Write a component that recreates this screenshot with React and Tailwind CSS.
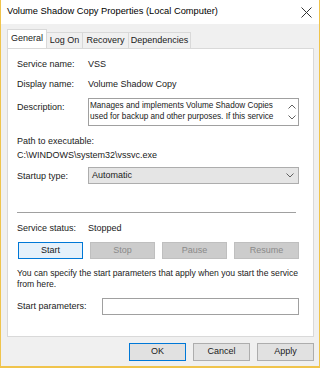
import React from "react";

const FONT = { fontFamily: '"Liberation Sans", Arial, sans-serif' };

const Chevron = ({ dir = "down", className = "" }) => (
  <svg width="8" height="5" viewBox="0 0 8 5" className={className}>
    <path
      d={dir === "down" ? "M0.5 0.5 L4 4 L7.5 0.5" : "M0.5 4.5 L4 1 L7.5 4.5"}
      fill="none"
      stroke="#606060"
      strokeWidth="1"
    />
  </svg>
);

const Label = ({ children, className = "" }) => (
  <div className={`w-[71px] shrink-0 h-[14px] leading-[14px] ${className}`}>{children}</div>
);

const Tab = ({ label, active, w }) => (
  <div
    style={{ width: w }}
    className={
      active
        ? "h-[19px] bg-white border border-b-0 border-[#d9d9d9] leading-[17px] text-center relative z-10 -mb-px"
        : "h-[16px] mt-[3px] bg-[#f0f0f0] border border-l-0 border-b-0 border-[#d9d9d9] leading-[15px] text-center"
    }
  >
    {label}
  </div>
);

const ServiceButton = ({ label, primary }) => (
  <div
    className={
      primary
        ? "h-[17px] border border-[#0078d7] bg-[#e5f1fb] text-[#1a1a1a] flex items-center justify-center"
        : "h-[17px] border border-[#bfbfbf] bg-[#cccccc] text-[#8a8a8a] flex items-center justify-center"
    }
  >
    {label}
  </div>
);

const DialogButton = ({ label, primary }) => (
  <div
    className={`w-[57px] h-[18px] border ${
      primary ? "border-[#0078d7]" : "border-[#adadad]"
    } bg-[#e1e1e1] flex items-center justify-center`}
  >
    {label}
  </div>
);

export default function App() {
  return (
    <div
      style={FONT}
      className="w-[320px] h-[368px] flex flex-col border-x border-b-2 border-[#f0c44c] text-[9px] text-[#1a1a1a] bg-[#f0f0f0]"
    >
      {/* title bar */}
      <div className="h-[24px] bg-white flex items-center justify-between pl-[6px] pr-[7px] text-[9.3px] text-black">
        <span>Volume Shadow Copy Properties (Local Computer)</span>
        <svg width="11" height="11" viewBox="0 0 11 11">
          <path d="M0.5 0.5 L10.5 10.5 M10.5 0.5 L0.5 10.5" stroke="#333" strokeWidth="1" />
        </svg>
      </div>

      <div className="flex-1 flex flex-col pl-[6px] pr-[5px]">
        {/* tabs */}
        <div className="flex mt-[5px] h-[19px] items-start">
          <Tab label="General" active w={40} />
          <Tab label="Log On" w={36} />
          <Tab label="Recovery" w={46} />
          <Tab label="Dependencies" w={62} />
        </div>

        {/* panel */}
        <div className="h-[289px] bg-white border border-[#d9d9d9] pl-[9px] pr-[14px] flex flex-col">
          <div className="flex mt-[8px]">
            <Label>Service name:</Label>
            <div className="h-[14px] leading-[14px]">VSS</div>
          </div>
          <div className="flex mt-[6px]">
            <Label>Display name:</Label>
            <div className="h-[14px] leading-[14px]">Volume Shadow Copy</div>
          </div>
          <div className="flex mt-[7px]">
            <Label className="mt-[2px]">Description:</Label>
            <div className="flex-1 h-[28px] border border-[#a0a0a0] flex">
              <div className="flex-1 pl-px pt-px leading-[11px] h-[24px] overflow-hidden text-[8.2px]">
                Manages and implements Volume Shadow Copies used for backup and other purposes. If this service
              </div>
              <div className="w-[12px] flex flex-col items-center justify-center gap-[6px]">
                <Chevron dir="up" />
                <Chevron dir="down" />
              </div>
            </div>
          </div>
          <div className="mt-[8px] h-[14px] leading-[14px]">Path to executable:</div>
          <div className="h-[14px] leading-[14px]">C:\WINDOWS\system32\vssvc.exe</div>
          <div className="flex items-center mt-[5px]">
            <Label>Startup type:</Label>
            <div className="flex-1 h-[17px] border border-[#adadad] bg-[#e5e5e5] flex items-center justify-between pl-[3px] pr-[4px]">
              <span>Automatic</span>
              <Chevron />
            </div>
          </div>
          <div className="mt-[28px] h-px bg-[#a0a0a0] mr-[3px]" />
          <div className="flex mt-[8px]">
            <Label>Service status:</Label>
            <div className="h-[14px] leading-[14px]">Stopped</div>
          </div>
          <div className="grid grid-cols-4 gap-[7px] mt-[7px] pl-px">
            <ServiceButton label="Start" primary />
            <ServiceButton label="Stop" />
            <ServiceButton label="Pause" />
            <ServiceButton label="Resume" />
          </div>
          <div className="mt-[9px] leading-[11px] text-[8.6px]">
            You can specify the start parameters that apply when you start the service from here.
          </div>
          <div className="flex items-center mt-[8px]">
            <div className="w-[85px] shrink-0">Start parameters:</div>
            <div className="flex-1 h-[17px] border border-[#a0a0a0] bg-white" />
          </div>
        </div>

        {/* dialog buttons */}
        <div className="flex justify-end gap-[7px] mt-[6px]">
          <DialogButton label="OK" primary />
          <DialogButton label="Cancel" />
          <DialogButton label="Apply" />
        </div>
      </div>
    </div>
  );
}
